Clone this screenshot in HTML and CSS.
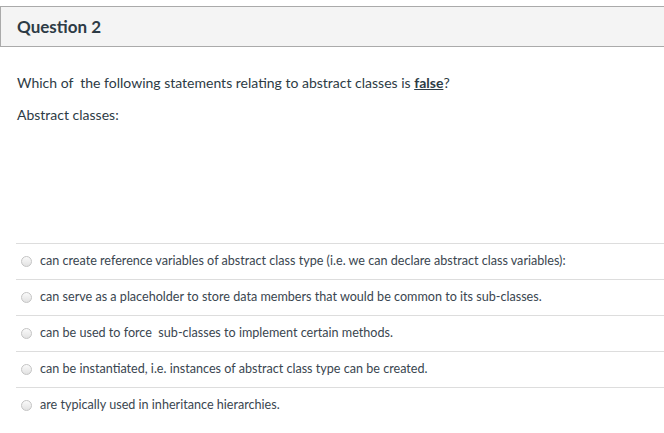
FILE: index.html
```html
<!DOCTYPE html>
<html>
<head>
<meta charset="utf-8">
<link rel="stylesheet" href="styles.css">
</head>
<body>
<div class="question">
  <div class="header"><span class="title">Question 2</span></div>
  <div class="content">
    <p class="text">Which of&nbsp; the following statements relating to abstract classes is <strong class="u">false</strong>?</p>
    <p class="text">Abstract classes:</p>
  </div>
  <div class="answers">
    <div class="answer"><span class="radio"></span><span class="label">can create reference variables of abstract class type (i.e. we can declare abstract class variables):</span></div>
    <div class="answer"><span class="radio"></span><span class="label">can serve as a placeholder to store data members that would be common to its sub-classes.</span></div>
    <div class="answer"><span class="radio"></span><span class="label">can be used to force&nbsp; sub-classes to implement certain methods.</span></div>
    <div class="answer"><span class="radio"></span><span class="label">can be instantiated, i.e. instances of abstract class type can be created.</span></div>
    <div class="answer"><span class="radio"></span><span class="label">are typically used in inheritance hierarchies.</span></div>
  </div>
</div>
</body>
</html>
```

FILE: styles.css
```css
html, body {
  margin: 0;
  padding: 0;
  background: #fff;
}
body {
  font-family: Lato, "Open Sans", sans-serif;
  color: #2d3b45;
}
.question {
  padding-top: 6px;
}
.header {
  height: 39px;
  background: #f4f4f4;
  border-top: 1px solid #aaaaaa;
  border-bottom: 1px solid #aaaaaa;
  border-left: 1px solid #aaaaaa;
  display: flex;
  align-items: center;
  padding-left: 16px;
}
.title {
  font-weight: 700;
  font-size: 17px;
  color: #2d3b45;
}
.content {
  padding-left: 17px;
  padding-top: 26px;
  height: 170px;
}
.text {
  margin: 0 0 12px 0;
  font-size: 14px;
  line-height: 20px;
}
.u {
  text-decoration: underline;
}
.answers {
  margin-left: 16px;
}
.answer {
  border-top: 1px solid #dddddd;
  height: 34px;
  padding-bottom: 1px;
  display: flex;
  align-items: center;
  font-size: 12.6px;
}
.radio {
  width: 9px;
  height: 9px;
  border-radius: 50%;
  border: 1px solid #c4c4c4;
  background: linear-gradient(#fafafa, #e2e2e2);
  margin-left: 5px;
  margin-right: 8px;
  flex: none;
}
.label {
  line-height: 16px;
  color: #3a4650;
}
```
